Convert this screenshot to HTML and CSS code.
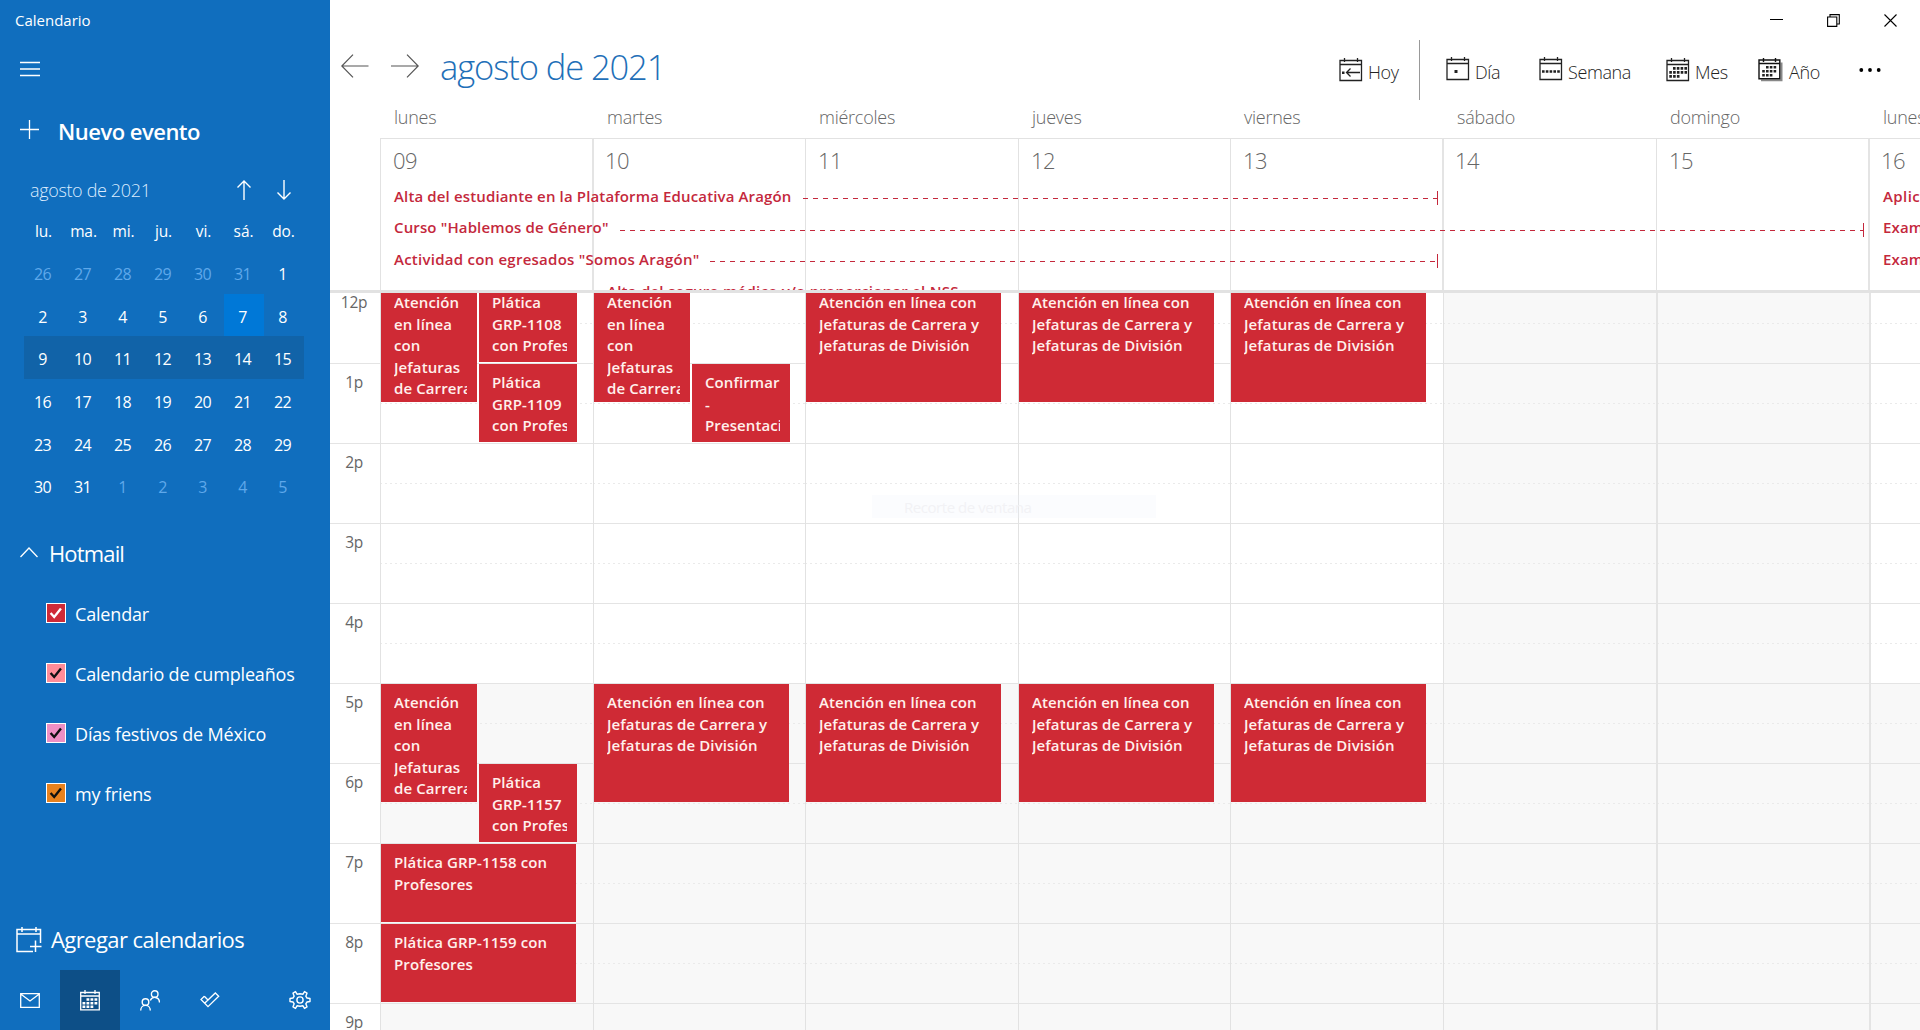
FILE: index.html
```html
<!DOCTYPE html>
<html lang="es">
<head>
<meta charset="utf-8">
<title>Calendario</title>
<link rel="stylesheet" href="styles.css">
</head>
<body>
<svg class="defs" width="0" height="0">
  <symbol id="cal" viewBox="0 0 24 25">
    <path d="M1 3.5H22.5V23.5H1ZM1 7.5H22.5M5.5 1V5M18.5 1V5" fill="none" stroke="currentColor" stroke-width="1.3"/>
  </symbol>
  <symbol id="check" viewBox="0 0 20 20">
    <path d="M4 10L8 14.5L15.500 5" fill="none" stroke="currentColor" stroke-width="2.6"/>
  </symbol>
</svg>
<div class="app">
  <aside class="sidebar">
    <div class="app-name">Calendario</div>
    <div class="menu"><svg width="20" height="16" viewBox="0 0 20 16"><path d="M0 1.5H20M0 8H20M0 14.5H20" stroke="#fff" stroke-width="1.3"/></svg></div>
    <div class="new-event">
      <svg width="19" height="19" viewBox="0 0 19 19"><path d="M0 9.5H19M9.5 0V19" stroke="#fff" stroke-width="1.3"/></svg>
      <span>Nuevo evento</span>
    </div>
    <div class="mini-head">
      <span>agosto de 2021</span>
      <svg width="14" height="20" viewBox="0 0 14 20"><path d="M7 20V1M.5 7.5L7 1L13.5 7.5" fill="none" stroke="#fff" stroke-width="1.4"/></svg>
      <svg width="14" height="20" viewBox="0 0 14 20"><path d="M7 0V19M.5 12.5L7 19L13.5 12.5" fill="none" stroke="#fff" stroke-width="1.4"/></svg>
    </div>
    <div class="mini dow"><span>lu.</span><span>ma.</span><span>mi.</span><span>ju.</span><span>vi.</span><span>sá.</span><span>do.</span></div>
    <div class="mini days">
      <i>26</i><i>27</i><i>28</i><i>29</i><i>30</i><i>31</i><span>1</span>
      <span>2</span><span>3</span><span>4</span><span>5</span><span>6</span><span class="today">7</span><span>8</span>
      <span class="sel">9</span><span class="sel">10</span><span class="sel">11</span><span class="sel">12</span><span class="sel">13</span><span class="sel">14</span><span class="sel">15</span>
      <span>16</span><span>17</span><span>18</span><span>19</span><span>20</span><span>21</span><span>22</span>
      <span>23</span><span>24</span><span>25</span><span>26</span><span>27</span><span>28</span><span>29</span>
      <span>30</span><span>31</span><i>1</i><i>2</i><i>3</i><i>4</i><i>5</i>
    </div>
    <div class="account">
      <svg width="18" height="11" viewBox="0 0 18 11"><path d="M.5 10L9 1L17.5 10" fill="none" stroke="#fff" stroke-width="1.3"/></svg>
      <span>Hotmail</span>
    </div>
    <ul class="calendars">
      <li><svg class="box red"><use href="#check"/></svg>Calendar</li>
      <li><svg class="box salmon"><use href="#check"/></svg>Calendario de cumpleaños</li>
      <li><svg class="box pink"><use href="#check"/></svg>Días festivos de México</li>
      <li><svg class="box orange"><use href="#check"/></svg>my friens</li>
    </ul>
    <div class="add-cal">
      <svg width="26" height="26" viewBox="0 0 26 26"><path d="M17 24.5H1V2.5H24.5V16M1 7H24.5M6 0V5M20 0V5M19.5 13.5V25M14 19.5H25.5" fill="none" stroke="#fff" stroke-width="1.5"/></svg>
      <span>Agregar calendarios</span>
    </div>
    <nav class="apps">
      <a><svg width="20" height="15" viewBox="0 0 20 15"><path d="M.7 .7H19.3V14.3H.7ZM.7 1L10 8L19.3 1" fill="none" stroke="#fff" stroke-width="1.3"/></svg></a>
      <a class="on"><svg width="20" height="21" viewBox="0 0 20 21"><path d="M.7 2.5H19.3V19.8H.7ZM.7 6H19.3M5 0V4M15 0V4" fill="none" stroke="#fff" stroke-width="1.3"/><path d="M6.5 9.5H17.5M2.5 13.2H17.5M2.5 16.8H14" stroke="#fff" stroke-width="2.4" stroke-dasharray="2.8 1.2"/></svg></a>
      <a><svg width="20" height="21" viewBox="0 0 20 21"><g fill="none" stroke="#fff" stroke-width="1.4"><circle cx="5.5" cy="12" r="3.3"/><path d="M.7 20.5C.7 13.7 10.3 13.7 10.3 20.5"/><circle cx="14.7" cy="4" r="3.3"/><path d="M10.3 10.5C11.8 6.2 19.3 6 19.5 12.5"/></g></svg></a>
      <a><svg width="20" height="16" viewBox="0 0 20 16"><path d="M4.300 4.200L1 7.500L8 14.700L18.700 4.300L15.300 1L8 8L4.300 4.200M4.600 11.200L8 8" fill="none" stroke="#fff" stroke-width="1.3"/></svg></a>
      <a class="gear"><svg width="22" height="22" viewBox="0 0 22 22"><g fill="none" stroke="#fff" stroke-width="1.4" stroke-linejoin="round"><circle cx="11" cy="11" r="3.1"/><path d="M14 5.2L15.5 2.6L18 4.2L16.8 7.2L18 9L21 9.5V12.5L18 13L16.8 14.8L18 17.8L15.5 19.4L14 16.8L11 17.2L8 16.8L6.500 19.400L4 17.800L5.200 14.800L4 13L1 12.500V9.500L4 9L5.200 7.200L4 4.200L6.500 2.600L8 5.200L11 4.800Z"/></g></svg></a>
    </nav>
  </aside>

  <main class="main">
    <div class="titlebar">
      <svg width="14" height="12" viewBox="0 0 14 12"><path d="M1 5.500H14" stroke="#000" stroke-width="1"/></svg>
      <svg width="13" height="13" viewBox="0 0 13 13"><path d="M.6 3H9.800V12.400H.6ZM3 3V.6H12.300V10H9.800" fill="none" stroke="#000" stroke-width="1.1"/></svg>
      <svg width="13" height="13" viewBox="0 0 13 13"><path d="M.5 .5L12.500 12.500M12.500 .5L.5 12.500" stroke="#000" stroke-width="1.1"/></svg>
    </div>
    <header class="toolbar">
      <svg class="prev" width="28" height="24" viewBox="0 0 28 24"><path d="M27.500 12H1M12 .7L.8 12L12 23.300" fill="none" stroke="#555" stroke-width="1.200"/></svg>
      <svg class="next" width="28" height="24" viewBox="0 0 28 24"><path d="M0 12H27M16 .7L27.200 12L16 23.300" fill="none" stroke="#555" stroke-width="1.200"/></svg>
      <h1>agosto de 2021</h1>
      <div class="views">
        <a class="v-hoy"><svg width="24" height="25" viewBox="0 0 24 25"><use href="#cal"/><path d="M21 15.500H8M11.500 11.500L7.500 15.500L11.500 19.500" fill="none" stroke="#222" stroke-width="1.300"/><path d="M3 14.500H5.500V17H3Z" fill="#222"/></svg>Hoy</a>
        <a class="v-dia"><svg width="24" height="25" viewBox="0 0 24 25"><use href="#cal"/><path d="M8.500 14H11.500V17H8.500Z" fill="#222"/></svg>Día</a>
        <a class="v-sem"><svg width="24" height="25" viewBox="0 0 24 25"><use href="#cal"/><path d="M3 15.500H21" stroke="#222" stroke-width="2.600" stroke-dasharray="2.600 1.200"/></svg>Semana</a>
        <a class="v-mes"><svg width="24" height="25" viewBox="0 0 24 25"><use href="#cal"/><path d="M7 11.300H21M3.300 15.300H21M3.300 19.300H14" stroke="#222" stroke-width="2.700" stroke-dasharray="2.600 1.200"/></svg>Mes</a>
        <a class="v-ano"><svg width="26" height="25" viewBox="0 0 26 25"><path d="M22.500 5.500H24.500V24.200H3V22.500H22.500Z" fill="#888"/><path d="M1 3H21.800V21.800H1ZM1 6.500H21.800M5.500 1V5M17.500 1V5" fill="none" stroke="#111" stroke-width="1.400"/><path d="M8 10.300H18.500M4.200 14.300H18.500M4.200 18.300H14.500" stroke="#222" stroke-width="2.600" stroke-dasharray="2.600 1.200"/></svg>Año</a>
        <svg class="more" width="22" height="6" viewBox="0 0 22 6"><circle cx="2.300" cy="3" r="1.900"/><circle cx="11" cy="3" r="1.900"/><circle cx="19.700" cy="3" r="1.900"/></svg>
      </div>
    </header>

    <div class="weekdays cols"><b></b><span>lunes</span><span>martes</span><span>miércoles</span><span>jueves</span><span>viernes</span><span>sábado</span><span>domingo</span><span>lunes</span></div>

    <section class="allday">
      <div class="cols dates"><b></b><div>09</div><div class="thick">10</div><div>11</div><div>12</div><div>13</div><div class="thick">14</div><div>15</div><div class="thick">16</div></div>
      <div class="cols spans">
        <div class="s1"><span>Alta del estudiante en la Plataforma Educativa Aragón</span><hr></div>
        <div class="s2"><span>Curso "Hablemos de Género"</span><hr></div>
        <div class="s3"><span class="wide">Actividad con egresados "Somos Aragón"</span><hr></div>
        <div class="s4"><span class="wide">Alta del seguro médico y/o proporcionar el NSS</span></div>
        <div class="n1">Aplicación</div><div class="n2">Examen</div><div class="n3">Examen</div>
      </div>
    </section>

    <section class="timeline">
      <div class="cols grid">
        <div class="hours"><span>12p</span><span>1p</span><span>2p</span><span>3p</span><span>4p</span><span>5p</span><span>6p</span><span>7p</span><span>8p</span><span>9p</span></div>
        <div class="day">
          <div class="ev a t12 h90">Atención<br>en línea<br>con<br>Jefaturas<br>de Carrera</div>
          <div class="ev b t12 h60">Plática<br>GRP-1108<br>con Profesores</div>
          <div class="ev b t13 h60">Plática<br>GRP-1109<br>con Profesores</div>
          <div class="ev a t17 h90">Atención<br>en línea<br>con<br>Jefaturas<br>de Carrera</div>
          <div class="ev b t18 h60">Plática<br>GRP-1157<br>con Profesores</div>
          <div class="ev t19 h60">Plática GRP-1158 con<br>Profesores</div>
          <div class="ev t20 h60">Plática GRP-1159 con<br>Profesores</div>
        </div>
        <div class="day">
          <div class="ev a t12 h90">Atención<br>en línea<br>con<br>Jefaturas<br>de Carrera</div>
          <div class="ev b t13 h60">Confirmar<br>-<br>Presentación</div>
          <div class="ev t17 h90">Atención en línea con<br>Jefaturas de Carrera y<br>Jefaturas de División</div>
        </div>
        <div class="day">
          <div class="ev t12 h90">Atención en línea con<br>Jefaturas de Carrera y<br>Jefaturas de División</div>
          <div class="ev t17 h90">Atención en línea con<br>Jefaturas de Carrera y<br>Jefaturas de División</div>
        </div>
        <div class="day">
          <div class="ev t12 h90">Atención en línea con<br>Jefaturas de Carrera y<br>Jefaturas de División</div>
          <div class="ev t17 h90">Atención en línea con<br>Jefaturas de Carrera y<br>Jefaturas de División</div>
        </div>
        <div class="day">
          <div class="ev t12 h90">Atención en línea con<br>Jefaturas de Carrera y<br>Jefaturas de División</div>
          <div class="ev t17 h90">Atención en línea con<br>Jefaturas de Carrera y<br>Jefaturas de División</div>
        </div>
        <div class="day off"></div>
        <div class="day off thick"></div>
        <div class="day thick"></div>
      </div>
    </section>
    <div class="tooltip">Recorte de ventana</div>
  </main>
</div>
</body>
</html>
```
FILE: styles.css
```css
* { box-sizing: border-box; }
body {
  margin: 0;
  height: 1030px;
  overflow: hidden;
  background: #fff;
  font-family: "Open Sans", "Noto Sans", sans-serif;
  color: #666;
}
svg { display: block; flex: none; }
.defs { position: absolute; }
.app { display: flex; height: 1030px; }

/* Sidebar */
.sidebar {
  width: 330px;
  flex: none;
  background: #106ebe;
  color: #fff;
  display: flex;
  flex-direction: column;
}
.app-name { padding-left: 15px; font-size: 15px; line-height: 40px; height: 40px; }
.menu { padding: 21px 20px 0; height: 60px; }
.new-event { display: flex; align-items: center; gap: 19px; height: 61px; padding-left: 20px; }
.new-event svg { margin-top: -3px; }
.new-event span { font-size: 22px; font-weight: 600; letter-spacing: -.5px; }
.mini-head { display: flex; align-items: center; height: 58px; padding-left: 30px; }
.mini-head span { width: 207px; font-size: 18px; font-weight: 300; letter-spacing: -.35px; color: #dcecff; }
.mini-head svg + svg { margin-left: 26px; }
.mini { display: grid; grid-template-columns: repeat(7, 40px); padding-left: 24px; text-align: center; }
.dow { height: 32px; line-height: 25px; font-size: 15.5px; letter-spacing: -.1px; }
.dow span { padding-right: 1px; }
.days { grid-auto-rows: 42.67px; line-height: 46px; font-size: 16px; letter-spacing: -.6px; }
.days > * { padding-right: 3px; }
.days i { font-style: normal; color: #5fa8ea; }
.today { background: #0078d7; }
.sel { background: #1163a8; }
.account { display: flex; align-items: center; height: 64px; margin-top: 14px; padding-left: 20px; gap: 11px; font-size: 22px; font-weight: 400; letter-spacing: -.85px; }
.calendars { list-style: none; margin: -2px 0 0; padding: 0 0 0 46px; font-size: 18px; letter-spacing: -.17px; }
.calendars li { display: flex; align-items: center; gap: 9px; height: 60px; line-height: 24px; padding-top: 2px; }
.box { width: 20px; height: 20px; border: 1px solid #fff; color: #111; margin-top: -2px; }
.box.red { background: #cf2a37; color: #fff; }
.box.salmon { background: #ff8c98; }
.box.pink { background: #ee8fc4; }
.box.orange { background: #e8821e; }
.add-cal { display: flex; align-items: center; gap: 9px; height: 60px; margin-top: auto; padding-left: 16px; font-size: 22px; font-weight: 400; letter-spacing: -.58px; }
.add-cal span { margin-top: -2px; }
.apps { display: flex; height: 60px; }
.apps a { width: 60px; display: flex; align-items: center; justify-content: center; }
.apps .on { background: #0d4f87; }
.apps .gear { margin-left: auto; }

/* Window controls and toolbar */
.main { flex: 1; min-width: 0; position: relative; display: flex; flex-direction: column; }
.titlebar { display: flex; justify-content: flex-end; align-items: center; height: 40px; padding-right: 23px; gap: 44px; }
.toolbar { display: flex; height: 60px; flex: none; }
.prev { margin: 14px 0 0 11px; }
.next { margin: 14px 0 0 22px; }
.toolbar h1 { margin: 0 0 0 21px; font-size: 34.500px; font-weight: 300; letter-spacing: -1.080px; line-height: 54px; color: #1f70b8; white-space: nowrap; }
.views { margin-left: auto; display: flex; color: #222; font-size: 18px; font-weight: 350; letter-spacing: -.4px; }
.views a { display: flex; height: 60px; line-height: 64px; }
.views a svg { margin: 17px 5px 0 0; }
.views .v-hoy { width: 81px; border-right: 1px solid #999; }
.views .v-dia { width: 93px; padding-left: 26px; }
.views .v-dia svg, .views .v-sem svg { margin-top: 16px; }
.views .v-sem { width: 127px; padding-left: 26px; }
.views .v-mes { width: 92px; padding-left: 26px; }
.views .v-ano { width: 127px; padding-left: 26px; }
.views .more { margin: 27px 39px 0 0; }

/* Week grid */
.cols { display: grid; grid-template-columns: 50px 213px 212px 213px 212px 213px 213px 213px 51px; width: 1590px; }
.weekdays { height: 38px; flex: none; font-size: 18px; font-weight: 350; letter-spacing: -.25px; line-height: 35px; }
.weekdays span { padding-left: 14px; white-space: nowrap; overflow: hidden; }
.allday { display: grid; height: 155px; flex: none; border-bottom: 3px solid #e2e2e2; overflow: hidden; }
.allday > * { grid-area: 1 / 1; height: 152px; }
.dates { font-size: 22px; font-weight: 300; letter-spacing: -.6px; line-height: 43px; }
.dates div { border-left: 1px solid #e2e2e2; border-top: 1px solid #e2e2e2; padding-left: 12px; }
.dates .thick { border-left: 2px solid #e4e4e4; margin-left: -1px; padding-left: 11px; }
.spans { grid-template-rows: repeat(4, 31.670px); padding-top: 42.600px; color: #c4283c; font-size: 15px; font-weight: 600; line-height: 31.670px; letter-spacing: .14px; white-space: nowrap; }
.spans > div { display: flex; align-items: center; padding-left: 14px; }
.spans .wide { letter-spacing: .25px; }
.s1 { grid-area: 1 / 2 / 2 / 7; }
.s2 { grid-area: 2 / 2 / 3 / 9; }
.s3 { grid-area: 3 / 2 / 4 / 7; }
.s4 { grid-area: 4 / 3 / 5 / 7; }
.n1 { grid-area: 1 / 9; }
.n2 { grid-area: 2 / 9; }
.n3 { grid-area: 3 / 9; }
.spans .n1, .spans .n2, .spans .n3 { overflow: hidden; }
.spans .n1 { letter-spacing: .4px; }
.spans hr {
  flex: 1;
  height: 14px;
  margin: 3px 5px 0 11px;
  border: 0;
  border-right: 1px solid #c4283c;
  background: repeating-linear-gradient(90deg, #c4283c 0 5px, transparent 5px 10px) right 7px / 100% 1px no-repeat;
}
.timeline { flex: 1; overflow: hidden; min-height: 0; }
.grid { margin-top: -10px; height: 800px; }
.hours { background: linear-gradient(#e4e4e4 1px, transparent 1px) 0 0 / 100% 80px; }
.hours span { display: block; height: 80px; padding-right: 2px; line-height: 38px; font-size: 15.500px; letter-spacing: -.3px; text-align: center; }
.day {
  display: grid;
  grid-template: repeat(40, 20px) / 96px 98px;
  column-gap: 2px;
  border-left: 1px solid #e2e2e2;
  background:
    radial-gradient(circle at 2px 40.500px, #eaeaea .9px, transparent 1px) 3px 0 / 5px 80px,
    linear-gradient(#e4e4e4 1px, transparent 1px) 0 0 / 100% 80px,
    linear-gradient(#fff 400px, #f8f8f8 400px);
}
.day.off { background:
    radial-gradient(circle at 2px 40.500px, #eaeaea .9px, transparent 1px) 3px 0 / 5px 80px,
    linear-gradient(#e4e4e4 1px, transparent 1px) 0 0 / 100% 80px,
    #f8f8f8; }
.day.thick { border-left: 2px solid #e4e4e4; }
.ev {
  grid-column: 1 / 3;
  width: 195px;
  margin: 1px 0;
  background: #cf2a35;
  color: #fff0ec;
  border: solid #cf2a35;
  border-width: 0 10px 0 13px;
  padding-top: 8px;
  font-size: 15px;
  font-weight: 600;
  line-height: 21.600px;
  letter-spacing: .1px;
  white-space: nowrap;
  overflow: hidden;
}
.ev.a { grid-column: 1; width: auto; }
.ev.b { grid-column: 2; width: auto; }
.t12 { grid-row-start: 1; }
.t13 { grid-row-start: 5; }
.t17 { grid-row-start: 21; }
.t18 { grid-row-start: 25; }
.t19 { grid-row-start: 29; }
.t20 { grid-row-start: 33; }
.h60 { grid-row-end: span 4; }
.h90 { grid-row-end: span 6; }
.tooltip {
  position: absolute;
  left: 542px;
  top: 495px;
  width: 284px;
  height: 23px;
  padding-left: 32px;
  background: rgba(236, 241, 252, .22);
  color: #f2f2f5;
  font-size: 15px;
  line-height: 24px;
  letter-spacing: -.45px;
}
```
